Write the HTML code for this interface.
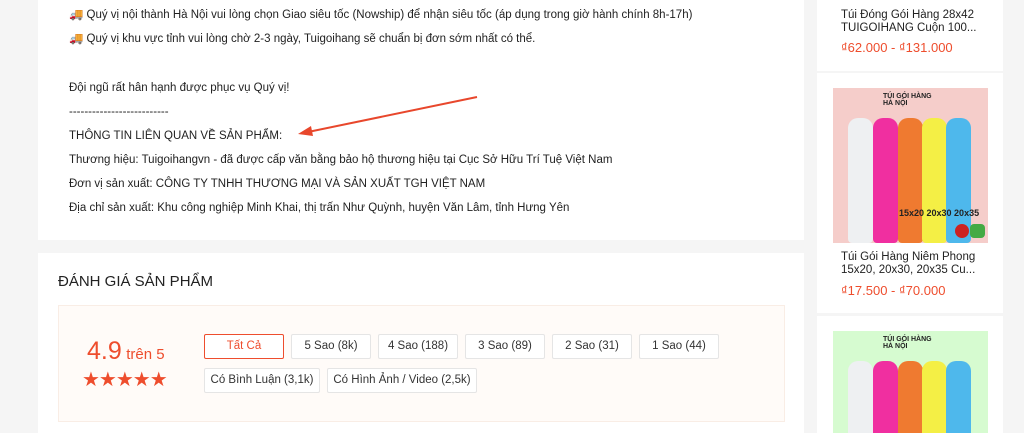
<!DOCTYPE html>
<html><head><meta charset="utf-8"><style>
*{margin:0;padding:0;box-sizing:border-box}
html,body{width:1024px;height:433px;overflow:hidden}
body{background:#f5f5f5;font-family:"Liberation Sans",sans-serif;color:#222;position:relative}
.p{position:absolute;background:#fff}
.t{position:absolute;left:69px;font-size:11.5px;line-height:14px;color:#222;white-space:nowrap}
.btn{position:absolute;height:25px;border:1px solid #e5e5e5;background:#fff;font-size:11.5px;color:#333;text-align:center;line-height:23px;border-radius:2px;white-space:nowrap}
.card{position:absolute;left:817px;width:186px;background:#fff;overflow:hidden}
.nm{position:absolute;left:24px;font-size:11.5px;line-height:13px;color:#222;width:160px;white-space:nowrap}
.pr{position:absolute;left:24px;font-size:13px;color:#ee4d2d;white-space:nowrap}
.img{position:absolute;left:16px;width:155px;height:155px;overflow:hidden}
.roll{position:absolute;top:30px;width:25px;height:125px;border-radius:10px 10px 4px 4px}
</style></head><body>
<div class="p" style="left:38px;top:0;width:766px;height:240px"></div>
<div class="t" style="top:8px">🚚 Quý vị nội thành Hà Nội vui lòng chọn Giao siêu tốc (Nowship) để nhận siêu tốc (áp dụng trong giờ hành chính 8h-17h)</div>
<div class="t" style="top:32px">🚚 Quý vị khu vực tỉnh vui lòng chờ 2-3 ngày, Tuigoihang sẽ chuẩn bị đơn sớm nhất có thể.</div>
<div class="t" style="top:81px">Đội ngũ rất hân hạnh được phục vụ Quý vị!</div>
<div class="t" style="top:105px">--------------------------</div>
<div class="t" style="top:129px">THÔNG TIN LIÊN QUAN VỀ SẢN PHẨM:</div>
<div class="t" style="top:153px">Thương hiệu: Tuigoihangvn - đã được cấp văn bằng bảo hộ thương hiệu tại Cục Sở Hữu Trí Tuệ Việt Nam</div>
<div class="t" style="top:177px">Đơn vị sản xuất: CÔNG TY TNHH THƯƠNG MẠI VÀ SẢN XUẤT TGH VIỆT NAM</div>
<div class="t" style="top:201px">Địa chỉ sản xuất: Khu công nghiệp Minh Khai, thị trấn Như Quỳnh, huyện Văn Lâm, tỉnh Hưng Yên</div>
<svg style="position:absolute;left:0;top:0;display:block" width="1024" height="433"><line x1="477" y1="97" x2="308" y2="132" stroke="#e8472c" stroke-width="2"/><polygon points="298,134 311,126 313,136" fill="#e8472c"/></svg>

<div class="p" style="left:38px;top:253px;width:766px;height:180px"></div>
<div style="position:absolute;left:58px;top:273px;font-size:15px;line-height:18px;color:#222">ĐÁNH GIÁ SẢN PHẨM</div>
<div style="position:absolute;left:58px;top:305px;width:727px;height:117px;background:#fffbf8;border:1px solid #f9ede5"></div>
<div style="position:absolute;left:87px;top:337px;line-height:28px;color:#ee4d2d;white-space:nowrap"><span style="font-size:25px">4.9</span> <span style="font-size:15px">trên 5</span></div>
<div style="position:absolute;left:82px;top:369px;color:#ee4d2d;font-size:20px;letter-spacing:-1px;line-height:22px">★★★★★</div>
<div class="btn" style="left:204px;top:334px;width:80px;border-color:#ee4d2d;color:#ee4d2d">Tất Cả</div>
<div class="btn" style="left:291px;top:334px;width:80px">5 Sao (8k)</div>
<div class="btn" style="left:378px;top:334px;width:80px">4 Sao (188)</div>
<div class="btn" style="left:465px;top:334px;width:80px">3 Sao (89)</div>
<div class="btn" style="left:552px;top:334px;width:80px">2 Sao (31)</div>
<div class="btn" style="left:639px;top:334px;width:80px">1 Sao (44)</div>
<div class="btn" style="left:204px;top:368px;width:116px">Có Bình Luận (3,1k)</div>
<div class="btn" style="left:327px;top:368px;width:150px">Có Hình Ảnh / Video (2,5k)</div>

<div class="card" style="top:0;height:71px">
<div class="nm" style="top:9px">Túi Đóng Gói Hàng 28x42<br>TUIGOIHANG Cuộn 100...</div>
<div class="pr" style="top:40px">₫62.000 - ₫131.000</div></div>
<div class="card" style="top:73px;height:240px">
<div class="img" style="top:15px;background:#f5cdca">
<div style="position:absolute;left:50px;top:5px;font-size:7px;font-weight:bold;color:#222">TÚI GÓI HÀNG<br>HÀ NỘI</div>
<div class="roll" style="left:15px;background:#eef0f2"></div><div class="roll" style="left:40px;background:#f02fa0"></div><div class="roll" style="left:65px;background:#ef7a30"></div><div class="roll" style="left:89px;background:#f4ef45"></div><div class="roll" style="left:113px;background:#4eb8ec"></div>
<div style="position:absolute;left:66px;top:120px;font-size:9px;font-weight:bold;color:#222;white-space:nowrap">15x20 20x30 20x35</div>
<div style="position:absolute;left:122px;top:136px;width:14px;height:14px;border-radius:50%;background:#c22"></div>
<div style="position:absolute;left:137px;top:136px;width:15px;height:14px;border-radius:4px;background:#4a4"></div></div>
<div class="nm" style="top:178px">Túi Gói Hàng Niêm Phong<br>15x20, 20x30, 20x35 Cu...</div>
<div class="pr" style="top:210px">₫17.500 - ₫70.000</div></div>
<div class="card" style="top:316px;height:117px">
<div class="img" style="top:15px;height:102px;background:#d6fbd0">
<div style="position:absolute;left:50px;top:5px;font-size:7px;font-weight:bold;color:#222">TÚI GÓI HÀNG<br>HÀ NỘI</div>
<div class="roll" style="left:15px;background:#eef0f2"></div><div class="roll" style="left:40px;background:#f02fa0"></div><div class="roll" style="left:65px;background:#ef7a30"></div><div class="roll" style="left:89px;background:#f4ef45"></div><div class="roll" style="left:113px;background:#4eb8ec"></div></div></div>
</body></html>
